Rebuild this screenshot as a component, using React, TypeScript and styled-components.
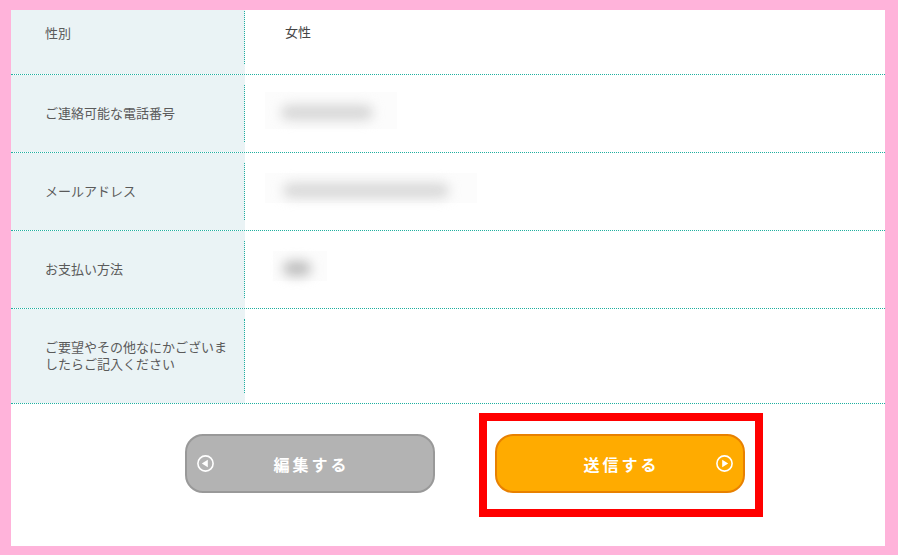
import styled, { createGlobalStyle } from 'styled-components';

const GlobalStyle = createGlobalStyle`
  html, body {
    margin: 0;
    padding: 0;
    background: #ffb3da;
  }
  body {
    font-family: "Noto Sans CJK JP", "Noto Sans", sans-serif;
  }
`;

const Frame = styled.div`
  width: 898px;
  height: 555px;
  padding: 10px 13px 9px 11px;
  box-sizing: border-box;
`;

const Panel = styled.div`
  width: 874px;
  height: 536px;
  background: #ffffff;
  overflow: hidden;
  display: flex;
  flex-direction: column;
`;

const Table = styled.div`
  margin-top: -13px;
  display: flex;
  flex-direction: column;
`;

const Row = styled.div<{ $h: number }>`
  display: grid;
  grid-template-columns: 234px 1fr;
  height: ${(p) => p.$h}px;
  border-bottom: 1px dotted #1fb0a0;
`;

const LabelCell = styled.div`
  background: #eaf3f5;
  padding: 10px 0;
  box-sizing: border-box;
`;

const LabelInner = styled.div<{ $lift?: number }>`
  height: 100%;
  border-right: 1px dotted #1fb0a0;
  display: flex;
  align-items: center;
  padding: 0 12px ${(p) => p.$lift ?? 3}px 34px;
  box-sizing: border-box;
  font-size: 13px;
  line-height: 17px;
  color: #5a5a5a;
`;

const ValueCell = styled.div`
  display: flex;
  align-items: center;
  padding-left: 40px;
  font-size: 13px;
  color: #444444;
`;

const ValueText = styled.span`
  margin-top: -9px;
`;

const BlurBox = styled.div<{ $w: number; $h: number; $pl: number; $shift: number }>`
  width: ${(p) => p.$w}px;
  height: ${(p) => p.$h}px;
  margin-left: ${(p) => p.$shift}px;
  margin-top: -7px;
  padding-left: ${(p) => p.$pl}px;
  background: #fcfcfc;
  display: flex;
  align-items: center;
  box-sizing: border-box;
`;

const Blob = styled.div<{ $w: number; $tone: string }>`
  width: ${(p) => p.$w}px;
  height: 15px;
  margin-top: 4px;
  border-radius: 8px;
  background: ${(p) => p.$tone};
  filter: blur(6px);
`;

const Actions = styled.div`
  display: flex;
  justify-content: center;
  gap: 60px;
  padding: 30px 0 0 34px;
`;

const ButtonWrap = styled.div`
  position: relative;
`;

const Highlight = styled.div`
  position: absolute;
  left: -16px;
  top: -21px;
  right: -18px;
  bottom: -24px;
  border: 8px solid #ff0000;
  pointer-events: none;
`;

const Btn = styled.button<{ $tone: 'gray' | 'orange' }>`
  width: 250px;
  height: 59px;
  box-sizing: border-box;
  border-radius: 18px;
  border: 2px solid ${(p) => (p.$tone === 'gray' ? '#999999' : '#e88100')};
  background: ${(p) => (p.$tone === 'gray' ? '#b3b3b3' : '#ffab00')};
  color: #ffffff;
  display: grid;
  grid-template-columns: 17px 1fr 17px;
  align-items: center;
  padding: 0 10px;
  font-family: "Noto Sans CJK JP", "Noto Sans", sans-serif;
  font-size: 16px;
  font-weight: 700;
  letter-spacing: 3px;
  cursor: pointer;
`;

const BtnText = styled.span`
  text-align: center;
  padding-left: 3px;
`;

function CircleArrow({ dir }: { dir: 'left' | 'right' }) {
  return (
    <svg width="17" height="17" viewBox="0 0 17 17">
      <circle cx="8.5" cy="8.5" r="7.6" fill="none" stroke="#fff" strokeWidth="1.6" />
      {dir === 'left' ? (
        <polygon points="4.8,8.5 10.8,4.8 10.8,12.2" fill="#fff" />
      ) : (
        <polygon points="12.2,8.5 6.2,4.8 6.2,12.2" fill="#fff" />
      )}
    </svg>
  );
}

export default function App() {
  return (
    <>
      <GlobalStyle />
      <Frame>
        <Panel>
          <Table>
            <Row $h={77}>
              <LabelCell>
                <LabelInner $lift={6}>性別</LabelInner>
              </LabelCell>
              <ValueCell>
                <ValueText>女性</ValueText>
              </ValueCell>
            </Row>
            <Row $h={77}>
              <LabelCell>
                <LabelInner>ご連絡可能な電話番号</LabelInner>
              </LabelCell>
              <ValueCell>
                <BlurBox $w={132} $h={37} $pl={16} $shift={-20}>
                  <Blob $w={92} $tone="#d6d6d6" />
                </BlurBox>
              </ValueCell>
            </Row>
            <Row $h={77}>
              <LabelCell>
                <LabelInner>メールアドレス</LabelInner>
              </LabelCell>
              <ValueCell>
                <BlurBox $w={212} $h={30} $pl={18} $shift={-20}>
                  <Blob $w={166} $tone="#d8d8d8" />
                </BlurBox>
              </ValueCell>
            </Row>
            <Row $h={77}>
              <LabelCell>
                <LabelInner>お支払い方法</LabelInner>
              </LabelCell>
              <ValueCell>
                <BlurBox $w={54} $h={30} $pl={10} $shift={-12}>
                  <Blob $w={28} $tone="#bdbdbd" />
                </BlurBox>
              </ValueCell>
            </Row>
            <Row $h={94}>
              <LabelCell>
                <LabelInner>ご要望やその他なにかございましたらご記入ください</LabelInner>
              </LabelCell>
              <ValueCell />
            </Row>
          </Table>
          <Actions>
            <Btn $tone="gray">
              <CircleArrow dir="left" />
              <BtnText>編集する</BtnText>
              <span />
            </Btn>
            <ButtonWrap>
              <Btn $tone="orange">
                <span />
                <BtnText>送信する</BtnText>
                <CircleArrow dir="right" />
              </Btn>
              <Highlight />
            </ButtonWrap>
          </Actions>
        </Panel>
      </Frame>
    </>
  );
}
